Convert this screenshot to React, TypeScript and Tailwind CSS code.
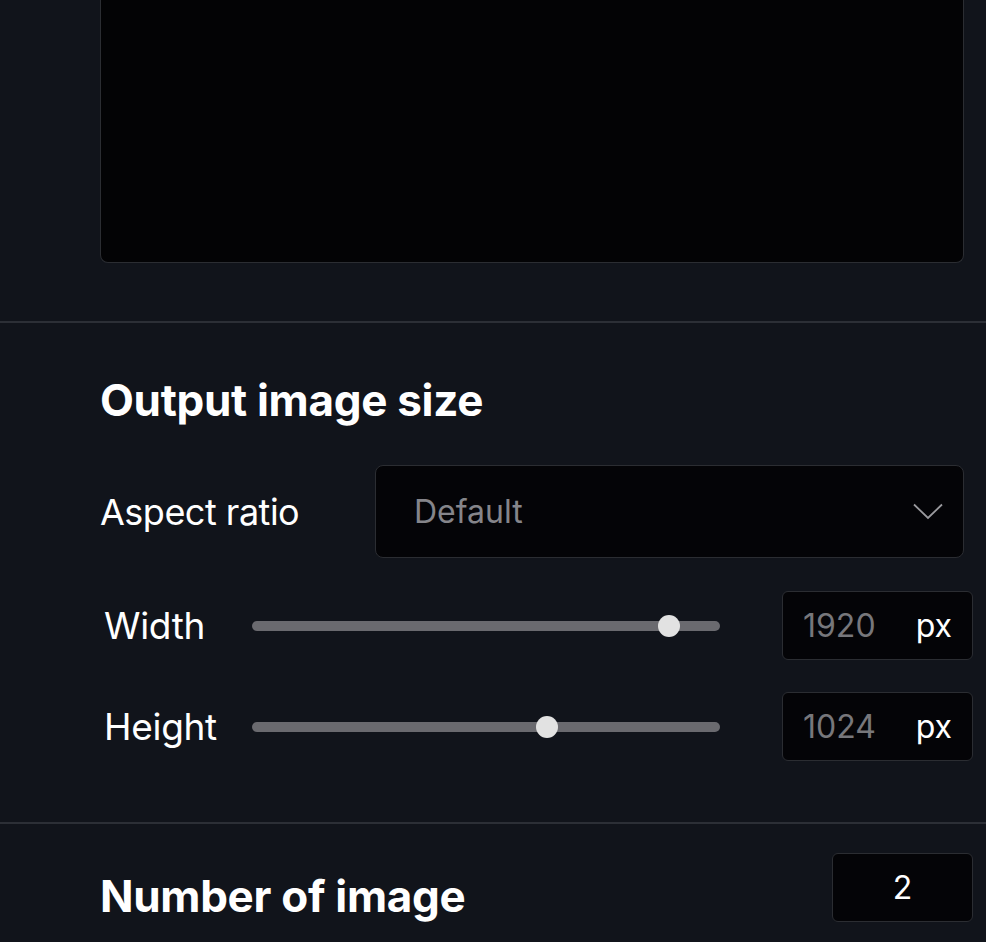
import React from "react";

const SizeRow = ({ label, value, pct }: { label: string; value: string; pct: number }) => {
  return (
    <div className="flex items-center pl-[4px]">
      <span className="w-[148px] text-[37px] text-white tracking-[-0.3px]">{label}</span>
      <div className="relative w-[468px] h-[10px] rounded-full bg-[#6a6a6f]">
        <div
          className="absolute top-1/2 w-[22px] h-[22px] -ml-[11px] -mt-[11px] rounded-full bg-[#e2e2e2]"
          style={{ left: `${pct}%` }}
        ></div>
      </div>
      <div className="ml-[62px] w-[191px] h-[69px] flex items-center justify-between px-[20px] rounded-md border border-[#2b2d32] bg-[#040407]">
        <span className="text-[32px] text-[#77777b]">{value}</span>
        <span className="text-[32px] text-white">px</span>
      </div>
    </div>
  );
};

const App = () => {
  return (
    <div className="min-h-screen w-full bg-[#11141b] font-['Inter',sans-serif] overflow-hidden">
      <div className="pl-[100px] pr-[22px]">
        <div className="h-[263px] rounded-b-lg border-x border-b border-[#2b2d32] bg-[#030305]"></div>
      </div>

      <div className="mt-[58px] border-t-2 border-[#2c2f36]"></div>

      <div className="pl-[100px] pr-[13px] pt-[51px] pb-[61px]">
        <h2 className="text-[44px] font-bold text-white leading-[52px] tracking-[-0.3px]">
          Output image size
        </h2>
        <div className="mt-[39px] flex items-center pr-[9px]">
          <span className="w-[275px] text-[36px] text-white tracking-[-0.5px]">Aspect ratio</span>
          <div className="flex-1 h-[93px] flex items-center justify-between pl-[38px] pr-[20px] rounded-lg border border-[#2b2d32] bg-[#040407]">
            <span className="text-[32px] text-[#85858a]">Default</span>
            <svg width="30" height="17" viewBox="0 0 30 17" fill="none">
              <path d="M1 1.5 L15 15 L29 1.5" stroke="#9a9a9e" strokeWidth="1.8" />
            </svg>
          </div>
        </div>
        <div className="mt-[33px] flex flex-col gap-[32px]">
          <SizeRow label="Width" value="1920" pct={89} />
          <SizeRow label="Height" value="1024" pct={63} />
        </div>
      </div>

      <div className="border-t-2 border-[#2c2f36]"></div>

      <div className="pl-[100px] pr-[13px] pt-[29px] flex items-start justify-between">
        <h2 className="mt-[17px] text-[44px] font-bold text-white leading-[52px] tracking-[-0.3px]">
          Number of image
        </h2>
        <div className="w-[141px] h-[69px] flex items-center justify-center rounded-md border border-[#2b2d32] bg-[#040407]">
          <span className="text-[32px] text-white">2</span>
        </div>
      </div>
    </div>
  );
};

export default App;
